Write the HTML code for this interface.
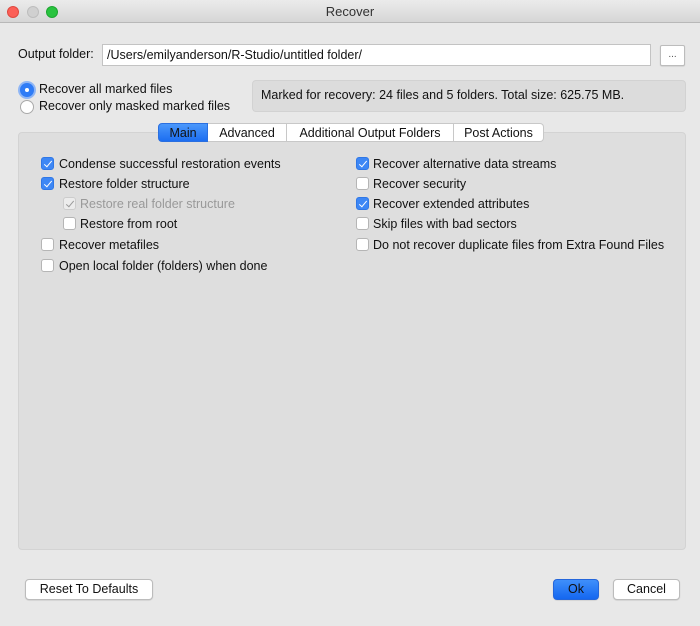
<!DOCTYPE html>
<html><head><style>
*{box-sizing:border-box;margin:0;padding:0}
body{width:700px;height:626px;background:#e8e8e8;font-family:"Liberation Sans",Arial,sans-serif;font-size:12.5px;color:#111;position:relative;overflow:hidden}
.a{position:absolute;white-space:nowrap}
.title{left:0;top:0;width:700px;height:23px;background:linear-gradient(#ebebeb,#d6d6d6);border-bottom:1px solid #b8b8b8;text-align:center;line-height:23px;font-size:13px;color:#333}
.dot{width:12px;height:12px;border-radius:50%;top:6px}
.cb{width:13px;height:13px;border-radius:3px;background:#fff;border:1px solid #b5b5b5}
.cb.on{background:#3d87f5;border-color:#2f77e6}
.cb.on::after{content:"";position:absolute;left:3.5px;top:1px;width:3px;height:7px;border:solid #fff;border-width:0 1.6px 1.6px 0;transform:rotate(40deg)}
.cb.dis{background:#ececec;border-color:#ccc}
.cb.dis::after{content:"";position:absolute;left:3.5px;top:1px;width:3px;height:7px;border:solid #999;border-width:0 1.4px 1.4px 0;transform:rotate(40deg)}
.btn{background:#fff;border:1px solid #bcbcbc;border-radius:4px;text-align:center;height:21px;line-height:19px;box-shadow:0 0.5px 1px rgba(0,0,0,.15)}
.tab{top:123px;height:19px;line-height:18px;text-align:center;background:#fff;border:1px solid #c8c8c8;border-left:none}
.l{top:1px}
</style></head><body>
<div class="a title">Recover</div>
<div class="a dot" style="left:7px;background:#fc5f57;border:1px solid #de4a41"></div>
<div class="a dot" style="left:27px;background:#d0d0d0;border:1px solid #bdbdbd"></div>
<div class="a dot" style="left:46px;background:#29c33f;border:1px solid #1ea631"></div>

<div class="a" style="left:18px;top:47px">Output folder:</div>
<div class="a" style="left:102px;top:44px;width:549px;height:22px;background:#fff;border:1px solid #c3c3c3;padding:2px 4px;line-height:16px">/Users/emilyanderson/R-Studio/untitled folder/</div>
<div class="a btn" style="left:660px;top:45px;width:25px;height:21px;border-radius:2px;font-size:10px;line-height:17px;color:#555">...</div>

<div class="a" style="left:20px;top:83px;width:14px;height:14px;border-radius:50%;background:#2f7cf6;box-shadow:0 0 0 2px #8fb6f5"></div>
<div class="a" style="left:25px;top:88px;width:4px;height:4px;border-radius:50%;background:#fff"></div>
<div class="a" style="left:39px;top:82px">Recover all marked files</div>
<div class="a" style="left:20px;top:100px;width:14px;height:14px;border-radius:50%;background:#fff;border:1px solid #aaa"></div>
<div class="a" style="left:39px;top:99px">Recover only masked marked files</div>

<div class="a" style="left:252px;top:80px;width:434px;height:32px;background:#dcdcdc;border-radius:4px;border:1px solid #d2d2d2;padding-left:8px;line-height:29px">Marked for recovery: 24 files and 5 folders. Total size: 625.75 MB.</div>

<div class="a" style="left:18px;top:132px;width:668px;height:418px;background:#dedede;border:1px solid #d3d3d3;border-radius:4px"></div>
<div class="a tab" style="left:158px;width:50px;background:linear-gradient(#4a97fb,#1c6ef1);border:1px solid #2a6fe0;border-radius:4px 0 0 4px;color:#111">Main</div>
<div class="a tab" style="left:208px;width:79px">Advanced</div>
<div class="a tab" style="left:287px;width:167px">Additional Output Folders</div>
<div class="a tab" style="left:454px;width:90px;border-radius:0 4px 4px 0">Post Actions</div>

<div class="a cb on" style="left:41px;top:157px"></div><div class="a" style="left:59px;top:157px">Condense successful restoration events</div>
<div class="a cb on" style="left:41px;top:177px"></div><div class="a" style="left:59px;top:177px">Restore folder structure</div>
<div class="a cb dis" style="left:63px;top:197px"></div><div class="a" style="left:80px;top:197px;color:#999">Restore real folder structure</div>
<div class="a cb" style="left:63px;top:217px"></div><div class="a" style="left:80px;top:217px">Restore from root</div>
<div class="a cb" style="left:41px;top:238px"></div><div class="a" style="left:59px;top:238px">Recover metafiles</div>
<div class="a cb" style="left:41px;top:259px"></div><div class="a" style="left:59px;top:259px">Open local folder (folders) when done</div>

<div class="a cb on" style="left:356px;top:157px"></div><div class="a" style="left:373px;top:157px">Recover alternative data streams</div>
<div class="a cb" style="left:356px;top:177px"></div><div class="a" style="left:373px;top:177px">Recover security</div>
<div class="a cb on" style="left:356px;top:197px"></div><div class="a" style="left:373px;top:197px">Recover extended attributes</div>
<div class="a cb" style="left:356px;top:217px"></div><div class="a" style="left:373px;top:217px">Skip files with bad sectors</div>
<div class="a cb" style="left:356px;top:238px"></div><div class="a" style="left:373px;top:238px">Do not recover duplicate files from Extra Found Files</div>

<div class="a btn" style="left:25px;top:579px;width:128px">Reset To Defaults</div>
<div class="a btn" style="left:553px;top:579px;width:46px;background:linear-gradient(#3f8ffb,#1467f0);border-color:#2466db">Ok</div>
<div class="a btn" style="left:613px;top:579px;width:67px">Cancel</div>
</body></html>
